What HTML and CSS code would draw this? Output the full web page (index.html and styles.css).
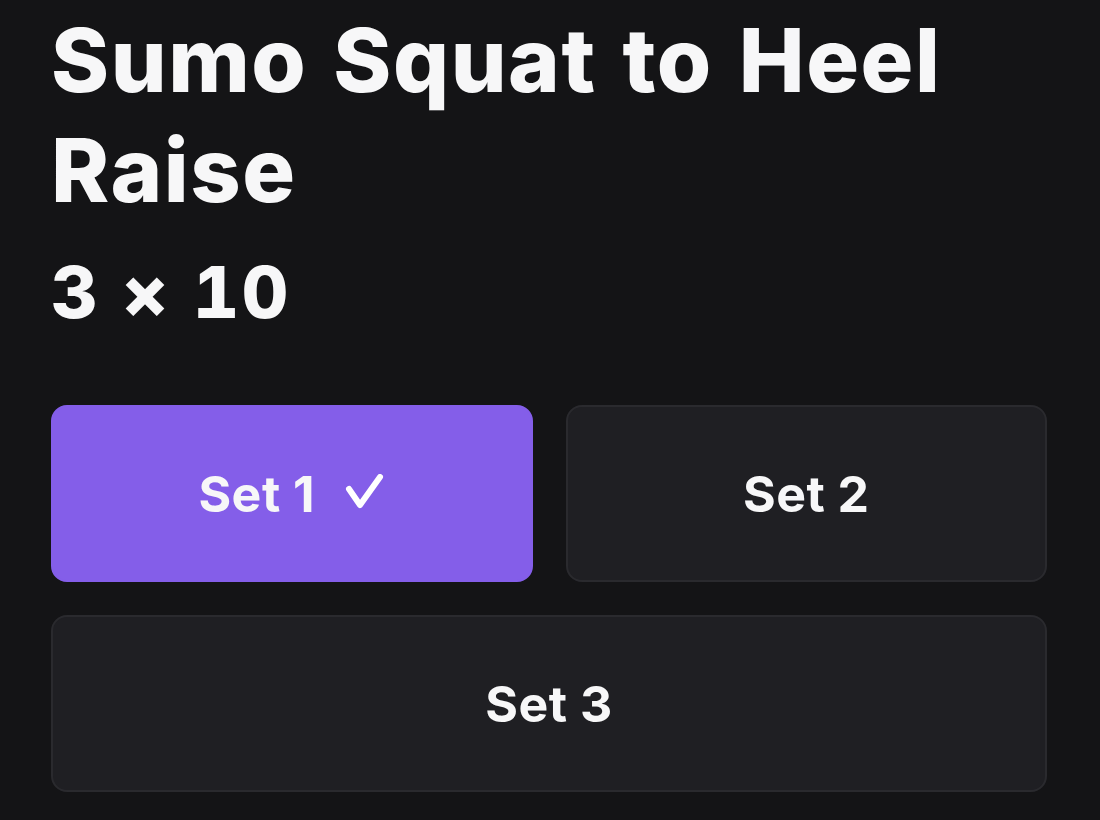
FILE: index.html
```html
<!DOCTYPE html>
<html lang="en">
<head>
<meta charset="utf-8">
<title>Sumo Squat to Heel Raise</title>
<link rel="stylesheet" href="styles.css">
</head>
<body>
<main class="screen">
  <h1 class="title">Sumo Squat to Heel Raise</h1>
  <p class="reps">3 × 10</p>
  <div class="sets">
    <button class="set set-done" type="button">
      <span>Set 1</span>
      <svg class="check" viewBox="0 0 40 40" width="40" height="40" aria-hidden="true">
        <polyline points="4,15 15,31 35,3" fill="none" stroke="#ffffff" stroke-width="6" stroke-linecap="round" stroke-linejoin="round"/>
      </svg>
    </button>
    <button class="set" type="button"><span>Set 2</span></button>
    <button class="set set-wide" type="button"><span>Set 3</span></button>
  </div>
</main>
</body>
</html>
```
FILE: styles.css
```css
html, body {
  margin: 0;
  padding: 0;
  background: #141416;
}

body {
  font-family: Inter, "Noto Sans", "Liberation Sans", sans-serif;
  color: #f7f7f8;
  width: 1100px;
  height: 820px;
  overflow: hidden;
}

.screen {
  padding: 5px 53px 0 51px;
}

.title {
  margin: 0;
  font-size: 88px;
  line-height: 110px;
  font-weight: 800;
  letter-spacing: 0.018em;
  word-spacing: 5px;
}

.reps {
  margin: 22px 0 0;
  font-size: 72px;
  line-height: 90px;
  font-weight: 800;
  font-feature-settings: "tnum";
  letter-spacing: 0.035em;
}

.sets {
  margin-top: 68px;
  display: grid;
  grid-template-columns: 1fr 1fr;
  gap: 33px;
}

.set {
  height: 177px;
  border-radius: 16px;
  border: 2px solid #2a2a2e;
  background: #1f1f23;
  color: #f7f7f8;
  font-family: inherit;
  font-size: 50px;
  font-weight: 700;
  letter-spacing: 0.01em;
  display: flex;
  align-items: center;
  justify-content: center;
  gap: 30px;
  padding: 0;
}

.set-done {
  background: #845ee9;
  border-color: #845ee9;
}

.set-wide {
  grid-column: 1 / -1;
}

.check {
  display: block;
  width: 40px;
  height: 40px;
}
```
